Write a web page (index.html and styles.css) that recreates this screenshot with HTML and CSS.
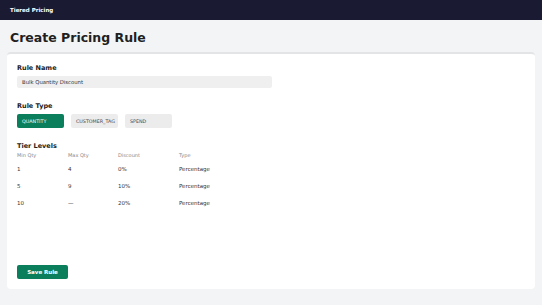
FILE: index.html
```html
<!DOCTYPE html>
<html>
<head>
  <meta charset="UTF-8">
  <title>Tiered Pricing</title>
  <link rel="stylesheet" href="styles.css">
</head>
<body>
  <div class="top-bar">Tiered Pricing</div>

  <div class="content">
    <h1>Create Pricing Rule</h1>

    <div class="card">
      <div class="field">
        <label class="label">Rule Name</label>
        <div class="input">Bulk Quantity Discount</div>
      </div>

      <div class="field">
        <label class="label">Rule Type</label>
        <div class="type-buttons">
          <button class="type-btn active">QUANTITY</button>
          <button class="type-btn">CUSTOMER_TAG</button>
          <button class="type-btn">SPEND</button>
        </div>
      </div>

      <!-- Tier table -->
      <div class="tiers">
        <div class="label">Tier Levels</div>
        <div class="tier-row tier-head">
          <span>Min Qty</span><span>Max Qty</span><span>Discount</span><span>Type</span>
        </div>
        <div class="tier-row">
          <span>1</span><span>4</span><span>0%</span><span>Percentage</span>
        </div>
        <div class="tier-row">
          <span>5</span><span>9</span><span>10%</span><span>Percentage</span>
        </div>
        <div class="tier-row">
          <span>10</span><span>—</span><span>20%</span><span>Percentage</span>
        </div>
      </div>

      <button class="save-btn">Save Rule</button>
    </div>
  </div>
</body>
</html>
```

FILE: styles.css
```css
/* Global Styles */
body {
  font-family: "DejaVu Sans", Verdana, sans-serif;
  margin: 0;
  padding: 0;
  background-color: #f3f4f6;
  color: #222;
}
/* Top Bar */
.top-bar {
  background-color: #1a1a33;
  color: #fff;
  height: 20px;
  padding: 0 10px;
  display: flex;
  align-items: center;
  font-size: 5.5px;
  font-weight: bold;
}
/* Content */
.content {
  padding: 0 7px;
}
h1 {
  font-size: 12.5px;
  margin: 10px 3px 7px;
  color: #1f1f1f;
}
.card {
  background: #fff;
  border-top: 2px solid #e2e4e6;
  border-radius: 4px;
  padding: 10px 10px 10px;
  height: 215px;
  display: flex;
  flex-direction: column;
}
.label {
  display: block;
  font-size: 6.5px;
  font-weight: bold;
  color: #222;
  margin-bottom: 4px;
}
.field {
  margin-bottom: 14px;
}
.input {
  width: 245px;
  height: 12px;
  line-height: 12px;
  padding: 0 5px 0 5px;
  background: #efefef;
  border-radius: 2px;
  font-size: 5.3px;
  color: #333;
}
.type-buttons {
  display: flex;
  gap: 7px;
}
.type-btn {
  width: 47px;
  height: 14px;
  border: none;
  border-radius: 2px;
  background: #ececec;
  color: #444;
  font-family: inherit;
  font-size: 4.8px;
  text-align: left;
  padding: 0 5px;
}
.type-btn.active {
  background: #0b7f5c;
  color: #fff;
}
.tiers .label {
  margin-bottom: 2px;
}
.tier-row {
  display: grid;
  grid-template-columns: 51px 50px 61px 1fr;
  font-size: 5.5px;
  color: #333;
  height: 17px;
  align-items: center;
}
.tier-row.tier-head {
  font-size: 5px;
  color: #888;
  height: 8px;
  align-items: start;
}
.save-btn {
  margin-top: auto;
  width: 51px;
  height: 14px;
  border: none;
  border-radius: 2px;
  background: #0b7f5c;
  color: #fff;
  font-family: inherit;
  font-size: 5.5px;
  font-weight: bold;
}
```
